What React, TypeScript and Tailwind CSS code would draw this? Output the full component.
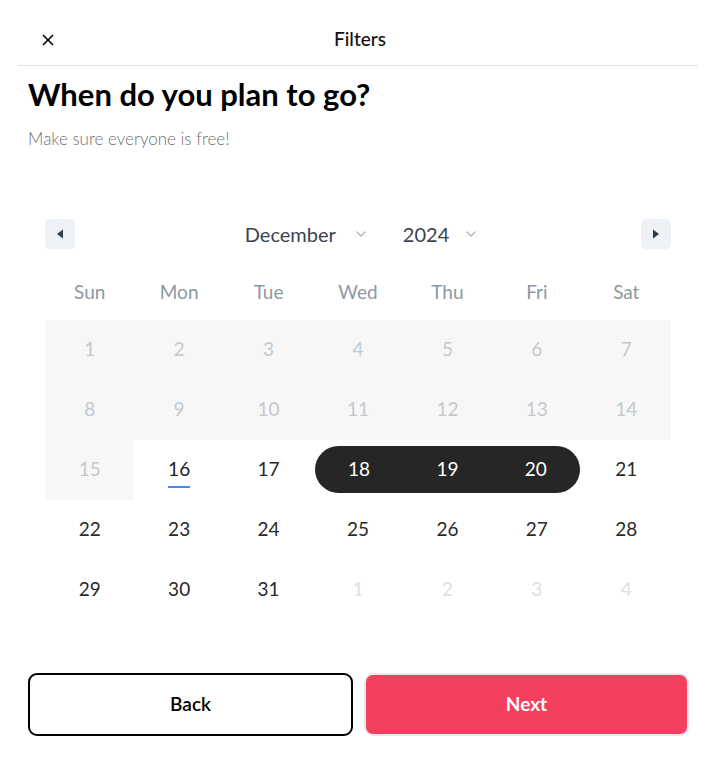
import { X, ChevronDown } from 'lucide-react'

const weekdays = ['Sun', 'Mon', 'Tue', 'Wed', 'Thu', 'Fri', 'Sat']

type Day = { n: number; kind: 'past' | 'today' | 'normal' | 'sel' | 'next' }

function buildDays(): Day[] {
  const days: Day[] = []
  for (let i = 1; i <= 31; i++) {
    let kind: Day['kind'] = 'normal'
    if (i < 16) kind = 'past'
    else if (i === 16) kind = 'today'
    else if (i >= 18 && i <= 20) kind = 'sel'
    days.push({ n: i, kind })
  }
  for (let i = 1; i <= 4; i++) days.push({ n: i, kind: 'next' })
  return days
}

function DayCell({ day, index }: { day: Day; index: number }) {
  const col = index % 7
  if (day.kind === 'past') {
    return (
      <div className="flex h-[60px] items-center justify-center bg-[#f7f7f7] text-[19px] text-[#c2c8cf]">
        {day.n}
      </div>
    )
  }
  if (day.kind === 'sel') {
    const rounded = col === 3 ? 'ml-[2px] rounded-l-full' : col === 5 ? 'mr-[2px] rounded-r-full' : ''
    return (
      <div className="flex h-[60px] items-center">
        <div className={`flex h-[47px] w-full items-center justify-center bg-[#262626] text-[19px] text-white ${rounded}`}>
          {day.n}
        </div>
      </div>
    )
  }
  if (day.kind === 'today') {
    return (
      <div className="relative flex h-[60px] items-center justify-center text-[19px] text-[#222]">
        {day.n}
        <span className="absolute left-1/2 top-[46px] h-[2px] w-[22px] -translate-x-1/2 bg-[#3b8cf5]" />
      </div>
    )
  }
  return (
    <div className={`flex h-[60px] items-center justify-center text-[19px] ${day.kind === 'next' ? 'text-[#dde0e4]' : 'text-[#2a2a2a]'}`}>
      {day.n}
    </div>
  )
}

export default function App() {
  const days = buildDays()
  return (
    <div className="h-[759px] w-[712px] bg-white font-['Lato','Noto_Sans',sans-serif]">
      <header className="ml-[18px] mr-[14px] flex h-[66px] items-center border-b border-[#e5e5e5] pt-[14px]">
        <button type="button" className="ml-[21px] text-black">
          <X className="h-[18px] w-[18px]" strokeWidth={2.2} />
        </button>
        <h1 className="flex-1 pr-[35px] text-center text-[19px] font-medium text-[#111]">Filters</h1>
      </header>

      <div className="px-[28px]">
        <h2 className="mt-[9px] text-[31px] font-bold leading-[38px] text-black">When do you plan to go?</h2>
        <p className="mt-[13px] text-[17px] font-light text-[#6f6f6f]">Make sure everyone is free!</p>
      </div>

      <section className="ml-[45px] mr-[41px] mt-[67px]">
        <div className="flex h-[30px] items-center justify-between">
          <button type="button" className="flex h-[30px] w-[30px] items-center justify-center rounded-[5px] bg-[#eef1f6]">
            <svg width="8" height="10" viewBox="0 0 8 10"><path d="M7 0.5 L1 5 L7 9.5 Z" fill="#2d3c4e" /></svg>
          </button>
          <div className="flex items-center pl-[8px] text-[20px] text-[#3a4450]">
            <span>December</span>
            <ChevronDown className="ml-[17px] h-[16px] w-[16px] text-[#a8b0ba]" strokeWidth={1.8} />
            <span className="ml-[34px]">2024</span>
            <ChevronDown className="ml-[14px] h-[16px] w-[16px] text-[#a8b0ba]" strokeWidth={1.8} />
          </div>
          <button type="button" className="flex h-[30px] w-[30px] items-center justify-center rounded-[5px] bg-[#eef1f6]">
            <svg width="8" height="10" viewBox="0 0 8 10"><path d="M1 0.5 L7 5 L1 9.5 Z" fill="#2d3c4e" /></svg>
          </button>
        </div>

        <div className="mt-[31px] grid grid-cols-7">
          {weekdays.map((d) => (
            <div key={d} className="flex h-[25px] items-center justify-center text-[19px] text-[#8d979f]">
              {d}
            </div>
          ))}
        </div>

        <div className="mt-[15px] grid grid-cols-7">
          {days.map((day, i) => (
            <DayCell key={i} day={day} index={i} />
          ))}
        </div>
      </section>

      <div className="mt-[53px] flex gap-[11px] pl-[28px] pr-[23px]">
        <button type="button" className="h-[63px] flex-1 rounded-[9px] border-2 border-black bg-white text-[19px] font-semibold text-black">
          Back
        </button>
        <button type="button" className="h-[63px] flex-1 rounded-[9px] border-2 border-[#e8e8ec] bg-[#f53f5e] text-[19px] font-bold text-white">
          Next
        </button>
      </div>
    </div>
  )
}
